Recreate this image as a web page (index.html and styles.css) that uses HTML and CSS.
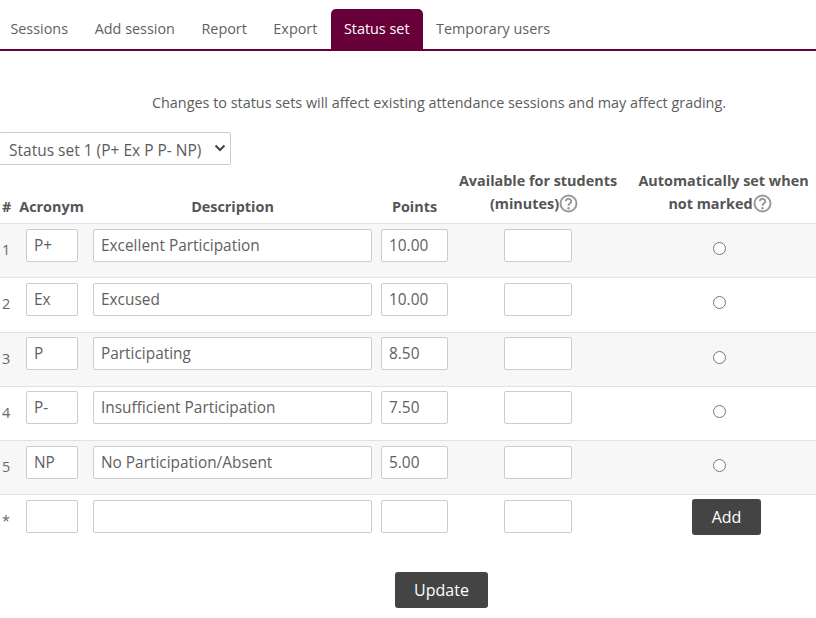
FILE: index.html
```html
<!DOCTYPE html>
<html lang="en">
<head>
<meta charset="utf-8">
<title>Status set</title>
<link rel="stylesheet" href="styles.css">
</head>
<body>
<nav class="tabs">
  <a class="tab">Sessions</a>
  <a class="tab">Add session</a>
  <a class="tab">Report</a>
  <a class="tab">Export</a>
  <a class="tab active">Status set</a>
  <a class="tab">Temporary users</a>
</nav>
<p class="notice">Changes to status sets will affect existing attendance sessions and may affect grading.</p>
<div class="select-wrap">
  <select class="set-select"><option>Status set 1 (P+ Ex P P- NP)</option></select>
  <svg class="chevron" width="12" height="8" viewBox="0 0 12 8"><path d="M1.500 1.500 6 6l4.500-4.500" fill="none" stroke="#444" stroke-width="2"/></svg>
</div>
<table class="statuses">
  <colgroup><col class="c-num"><col class="c-acr"><col class="c-desc"><col class="c-pts"><col class="c-avail"><col class="c-auto"></colgroup>
  <thead>
    <tr>
      <th>#</th>
      <th>Acronym</th>
      <th>Description</th>
      <th>Points</th>
      <th class="th-long">Available for students<br>(minutes)<svg class="help help-avail" width="19" height="19" viewBox="0 0 19 19"><circle cx="9.500" cy="9.500" r="8" fill="none" stroke="#999" stroke-width="2"/><path d="M6.800 7.300a2.700 2.500 0 1 1 4.200 2.100c-1 .7-1.500 1.100-1.500 2.300" fill="none" stroke="#999" stroke-width="2"/><circle cx="9.500" cy="14.200" r="1.200" fill="#999"/></svg></th>
      <th class="th-long"><span class="auto-first">Automatically set when</span><br>not marked<svg class="help" width="19" height="19" viewBox="0 0 19 19"><circle cx="9.500" cy="9.500" r="8" fill="none" stroke="#999" stroke-width="2"/><path d="M6.800 7.300a2.700 2.500 0 1 1 4.200 2.100c-1 .7-1.500 1.100-1.500 2.300" fill="none" stroke="#999" stroke-width="2"/><circle cx="9.500" cy="14.200" r="1.200" fill="#999"/></svg></th>
    </tr>
  </thead>
  <tbody>
    <tr class="odd"><td class="num">1</td><td><input class="i-acr" value="P+"></td><td><input class="i-desc" value="Excellent Participation"></td><td><input class="i-pts" value="10.00"></td><td class="ctr"><input class="i-avail"></td><td class="ctr radio-cell"><input type="radio" class="radio" name="a1"></td></tr>
    <tr><td class="num">2</td><td><input class="i-acr" value="Ex"></td><td><input class="i-desc" value="Excused"></td><td><input class="i-pts" value="10.00"></td><td class="ctr"><input class="i-avail"></td><td class="ctr radio-cell"><input type="radio" class="radio" name="a2"></td></tr>
    <tr class="odd"><td class="num">3</td><td><input class="i-acr" value="P"></td><td><input class="i-desc" value="Participating"></td><td><input class="i-pts" value="8.50"></td><td class="ctr"><input class="i-avail"></td><td class="ctr radio-cell"><input type="radio" class="radio" name="a3"></td></tr>
    <tr><td class="num">4</td><td><input class="i-acr" value="P-"></td><td><input class="i-desc" value="Insufficient Participation"></td><td><input class="i-pts" value="7.50"></td><td class="ctr"><input class="i-avail"></td><td class="ctr radio-cell"><input type="radio" class="radio" name="a4"></td></tr>
    <tr class="odd"><td class="num">5</td><td><input class="i-acr" value="NP"></td><td><input class="i-desc" value="No Participation/Absent"></td><td><input class="i-pts" value="5.00"></td><td class="ctr"><input class="i-avail"></td><td class="ctr radio-cell"><input type="radio" class="radio" name="a5"></td></tr>
    <tr class="new"><td class="num">*</td><td><input class="i-acr"></td><td><input class="i-desc"></td><td><input class="i-pts"></td><td class="ctr"><input class="i-avail"></td><td class="add-cell"><button class="btn btn-add">Add</button></td></tr>
  </tbody>
</table>
<div class="actions"><button class="btn btn-update">Update</button></div>
</body>
</html>
```
FILE: styles.css
```css
* { box-sizing: border-box; }
html, body { margin: 0; padding: 0; background: #fff; }
body {
  width: 816px;
  height: 618px;
  overflow: hidden;
  font-family: "Open Sans", sans-serif;
  font-size: 14.4px;
  color: #5c5c5c;
}
.tabs {
  display: flex;
  height: 51px;
  padding-top: 9px;
  border-bottom: 2px solid #670038;
}
.tab {
  padding: 0 13.25px;
  height: 40px;
  line-height: 40px;
  color: #5f5f5f;
  border-radius: 5px 5px 0 0;
}
.tabs .tab:first-child { padding: 0 13.4px 0 10.4px; }
.tab.active { background: #670038; color: #fff; }
.notice {
  margin: 0;
  padding: 42px 0 0 62px;
  height: 81px;
  line-height: 20px;
  text-align: center;
}
.select-wrap {
  position: relative;
  width: 232px;
  margin-left: -1px;
  height: 33px;
}
.set-select {
  appearance: none;
  width: 232px;
  height: 33px;
  padding: 2px 0 0 9px;
  border: 1px solid #ccc;
  border-radius: 2px;
  background: #fff;
  font: inherit;
  font-size: 15.5px;
  color: #5c5c5c;
}
.chevron { position: absolute; left: 215px; top: 12px; }
.statuses {
  table-layout: fixed;
  border-collapse: collapse;
  width: 816px;
  margin-top: 4px;
}
.c-num { width: 18px; }
.c-acr { width: 67px; }
.c-desc { width: 295px; }
.c-pts { width: 69px; }
.c-avail { width: 178px; }
.c-auto { width: 189px; }
th {
  vertical-align: bottom;
  font-weight: 700;
  line-height: 23px;
  color: #555;
  text-align: center;
  padding: 0 0 5px;
  border-bottom: 1px solid #dee2e6;
}
th:first-child { text-align: left; padding-left: 2px; }
th.th-long { padding: 0 0 8px; }
th.th-long:last-child { padding-right: 3px; }
.auto-first { padding-left: 7px; }
.help { vertical-align: -4px; }
.help-avail { margin-right: 8px; }
td {
  height: 54.25px;
  padding: 4.6px 0 0 8px;
  vertical-align: top;
  border-bottom: 1px solid #dee2e6;
}
.new td { border-bottom: 0; }
.odd td { background: #f7f7f7; }
td.num { padding: 16px 0 0 2px; line-height: 20px; color: #666; }
td.ctr { padding-left: 0; text-align: center; }
td.radio-cell { padding: 16px 5px 0 0; }
td.add-cell { padding: 4px 0 0 65px; }
input:not([type]) {
  display: block;
  height: 33px;
  padding: 0 7px;
  border: 1px solid #ccc;
  border-radius: 2px;
  background: #fff;
  font: inherit;
  font-size: 15.4px;
  color: #5f5f5f;
}
.i-acr { width: 52px; }
.i-desc { width: 279px; }
.i-pts { width: 67px; margin-left: -7px; }
.i-avail { width: 68px; margin: 0 auto; }
.radio {
  width: 13px;
  height: 13px;
  margin: 0;
}
.btn {
  display: block;
  height: 36px;
  border: 0;
  border-radius: 3px;
  background: #444;
  color: #fff;
  font: inherit;
  font-size: 16px;
}
.btn-add { width: 69px; }
.btn-update { width: 93px; }
.actions {
  display: flex;
  justify-content: center;
  padding: 23px 0 0 67px;
}
```
